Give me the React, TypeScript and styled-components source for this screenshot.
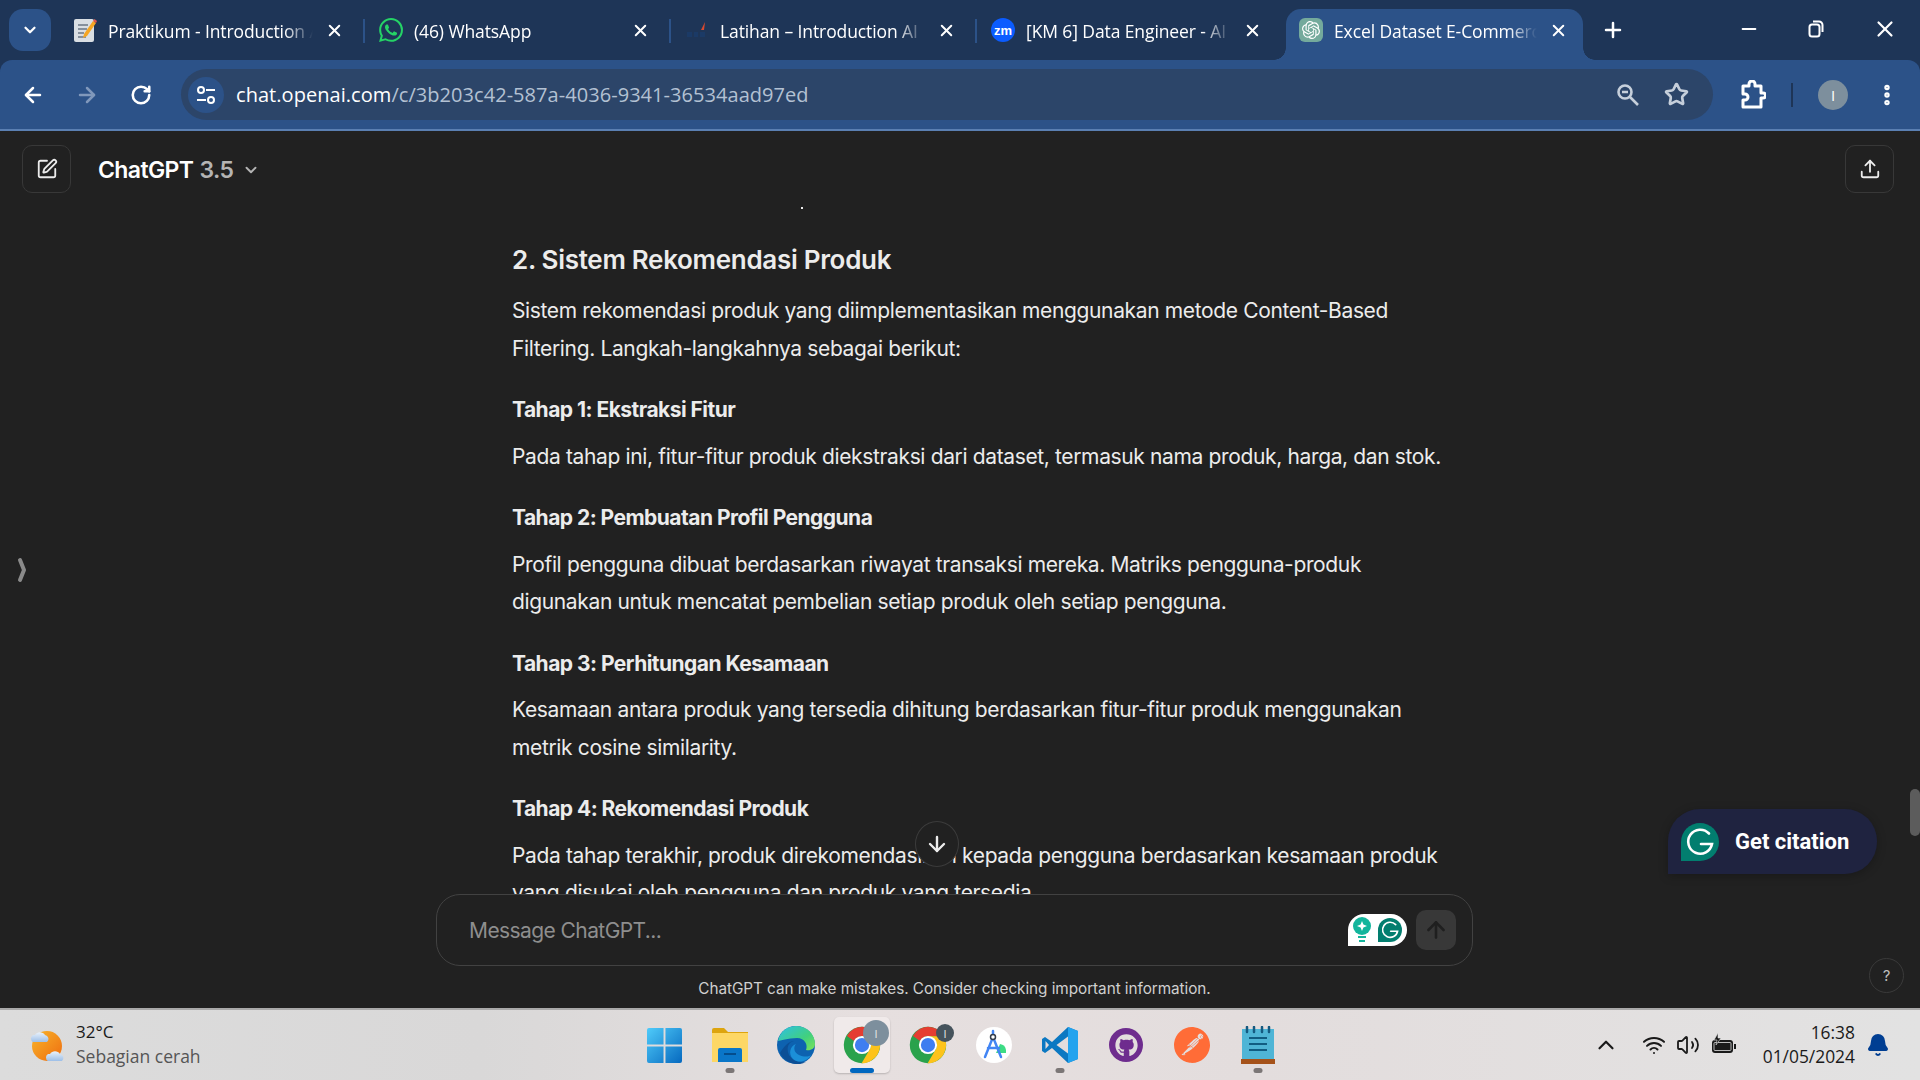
import React, { FC, ReactNode } from "react";
import styled, { createGlobalStyle } from "styled-components";
import {
  ArrowDown,
  ArrowLeft,
  ArrowRight,
  ArrowUp,
  Bell,
  ChevronDown,
  ChevronUp,
  EllipsisVertical,
  Minus,
  Plus,
  RotateCw,
  SquarePen,
  Star,
  Upload,
  Volume2,
  Wifi,
  X,
} from "lucide-react";
import { SiOpenai, SiPostman, SiWhatsapp } from "react-icons/si";
import { FaGithub } from "react-icons/fa";

const GlobalStyle = createGlobalStyle`
  html, body {
    margin: 0;
    padding: 0;
    height: 100%;
    overflow: hidden;
    background: #212121;
  }
  #root {
    height: 100%;
  }
  * {
    box-sizing: border-box;
  }
`;

const Page = styled.div`
  display: flex;
  flex-direction: column;
  height: 1080px;
  width: 1920px;
  font-family: "Inter", "Liberation Sans", sans-serif;
  background: #1e3557;
`;

/* ---------- tab strip ---------- */

const TabStrip = styled.div`
  display: flex;
  align-items: flex-end;
  height: 60px;
  padding-left: 9px;
  color: #fff;
  font-family: "Open Sans", "Liberation Sans", sans-serif;
`;

const TabSearch = styled.div`
  display: flex;
  align-items: center;
  justify-content: center;
  width: 42px;
  height: 42px;
  margin: 0 8px 9px 0;
  border-radius: 14px;
  background: #2c5288;
`;

const Tab = styled.div<{ $active?: boolean; $last?: boolean }>`
  position: relative;
  display: flex;
  align-items: center;
  flex: none;
  width: ${(p) => (p.$active ? "297px" : "306px")};
  height: 51px;
  margin-left: ${(p) => (p.$active ? "3px" : "0")};
  padding: 0 ${(p) => (p.$active ? "15px" : "21px")} 9px ${(p) => (p.$active ? "13px" : "14px")};
  border-radius: 15px 15px 0 0;
  background: ${(p) => (p.$active ? "#2c5288" : "transparent")};

  &::after {
    content: "";
    display: ${(p) => (p.$active || p.$last ? "none" : "block")};
    position: absolute;
    right: 0;
    top: 10px;
    width: 2px;
    height: 24px;
    background: #2c5288;
  }

  &::before {
    content: "";
    display: ${(p) => (p.$active ? "block" : "none")};
    position: absolute;
    left: -12px;
    right: -12px;
    bottom: 0;
    height: 12px;
    background:
      radial-gradient(circle at 0 0, #1e3557 11.5px, #2c5288 12px) left / 12px 12px no-repeat,
      radial-gradient(circle at 100% 0, #1e3557 11.5px, #2c5288 12px) right / 12px 12px no-repeat;
  }
`;

const TabIcon = styled.span`
  display: flex;
  align-items: center;
  justify-content: center;
  flex: none;
  width: 24px;
  height: 24px;
`;

const TabTitle = styled.span`
  flex: 1;
  min-width: 0;
  margin: 2px 12px 0 11px;
  overflow: hidden;
  white-space: nowrap;
  font-size: 17.5px;
  letter-spacing: -0.1px;
  -webkit-mask-image: linear-gradient(to right, #000 86%, transparent 100%);
  mask-image: linear-gradient(to right, #000 86%, transparent 100%);
`;

const ZoomBadge = styled.span`
  display: flex;
  align-items: center;
  justify-content: center;
  width: 24px;
  height: 24px;
  border-radius: 50%;
  background: #0b5cff;
  color: #fff;
  font: 700 13px "Liberation Sans", sans-serif;
`;

const OpenAiBadge = styled.span`
  display: flex;
  align-items: center;
  justify-content: center;
  width: 24px;
  height: 24px;
  border-radius: 6px;
  background: #74aa9c;
  color: #fff;
`;

const NewTab = styled.div`
  display: flex;
  margin: 0 0 18px 18px;
`;

const WindowControls = styled.div`
  display: flex;
  align-items: center;
  margin-left: auto;
  padding-right: 22px;
  margin-bottom: 18px;
  gap: 48px;
`;

/* ---------- toolbar ---------- */

const Toolbar = styled.div`
  display: flex;
  align-items: center;
  flex: none;
  height: 71px;
  padding: 0 0 0 11px;
  border-radius: 12px 12px 0 0;
  border-bottom: 2px solid #5a7fb2;
  background: #2c5288;
  color: #fff;
`;

const NavButton = styled.div<{ $dim?: boolean }>`
  display: flex;
  align-items: center;
  justify-content: center;
  width: 44px;
  height: 44px;
  margin-right: 10px;
  color: ${(p) => (p.$dim ? "#8098bb" : "#fff")};
`;

const Omnibox = styled.div`
  display: flex;
  align-items: center;
  width: 1532px;
  height: 51px;
  margin-left: 8px;
  padding: 0 24px 0 7px;
  border-radius: 26px;
  background: #2c4569;
`;

const SiteBadge = styled.div`
  display: flex;
  align-items: center;
  justify-content: center;
  width: 36px;
  height: 36px;
  border-radius: 50%;
  background: #2c5288;
`;

const Url = styled.div`
  margin-left: 12px;
  font-family: "Open Sans", "Liberation Sans", sans-serif;
  font-size: 20px;
  letter-spacing: 0.05px;
  color: #b3c1d3;
  white-space: nowrap;

  b {
    font-weight: 400;
    color: #fff;
  }
`;

const OmniActions = styled.div`
  display: flex;
  align-items: center;
  gap: 24px;
  margin-left: auto;
  color: #c6cfdb;
`;

const ToolbarRight = styled.div`
  display: flex;
  align-items: center;
  margin-left: 27px;
`;

const ToolbarDivider = styled.div`
  width: 2px;
  height: 24px;
  margin: 0 25px 0 25px;
  background: #1e3557;
`;

const Avatar = styled.div`
  display: flex;
  align-items: center;
  justify-content: center;
  width: 30px;
  height: 30px;
  margin-right: 26px;
  border-radius: 50%;
  background: #7d8f9d;
  color: #fff;
  font: 400 15px "Open Sans", sans-serif;
`;

/* ---------- chat ---------- */

const Main = styled.main`
  position: relative;
  display: flex;
  flex: 1;
  flex-direction: column;
  min-height: 0;
  background: #212121;
  color: #ececec;
`;

const ChatHeader = styled.header`
  display: flex;
  align-items: center;
  flex: none;
  height: 76px;
  padding: 0 26px 0 22px;
`;

const IconButton = styled.div`
  display: flex;
  align-items: center;
  justify-content: center;
  width: 49px;
  height: 48px;
  border: 1px solid #383838;
  border-radius: 10px;
  color: #ececec;
`;

const ModelName = styled.div`
  display: flex;
  align-items: center;
  margin: 2px 0 0 27px;
  font-size: 23px;
  font-weight: 600;
  letter-spacing: -0.6px;
  color: #fff;

  span {
    margin-left: 6px;
    color: #b4b4b4;
  }

  svg {
    margin-left: 9px;
    color: #b4b4b4;
  }
`;

const HeaderSpacer = styled.div`
  flex: 1;
`;

const Transcript = styled.div`
  flex: 1;
  min-height: 0;
  overflow: hidden;
  padding-left: 512px;
`;

const Article = styled.article`
  width: 940px;
`;

const ClippedTail = styled.div`
  width: 2px;
  height: 2px;
  margin: 0 0 32px 289px;
  background: #ececec;
`;

const Heading = styled.h3`
  margin: 0 0 14px;
  font-size: 26px;
  line-height: 37px;
  font-weight: 600;
  letter-spacing: -0.3px;
`;

const Para = styled.p`
  margin: 0 0 24px;
  font-size: 21px;
  line-height: 37.5px;
  letter-spacing: -0.36px;
`;

const StepTitle = styled.h4`
  margin: 0 0 9px;
  font-size: 21px;
  line-height: 37.5px;
  font-weight: 700;
  letter-spacing: -0.53px;
`;

const Footer = styled.div`
  flex: none;
  width: 1037px;
  margin-left: 436px;
`;

const Composer = styled.div`
  display: flex;
  align-items: center;
  height: 72px;
  padding: 0 16px 0 32px;
  border: 1px solid #424242;
  border-radius: 24px;
  background: #212121;
`;

const Placeholder = styled.div`
  flex: 1;
  font-size: 21px;
  letter-spacing: -0.58px;
  color: #8e8e8e;
`;

const GrammarlyPill = styled.div`
  display: flex;
  align-items: center;
  justify-content: center;
  gap: 7px;
  width: 59px;
  height: 32px;
  margin-right: 9px;
  border-radius: 16px 16px 16px 0;
  background: #fff;
`;

const SendButton = styled.div`
  display: flex;
  align-items: center;
  justify-content: center;
  width: 40px;
  height: 40px;
  border-radius: 10px;
  background: #383838;
  color: #1f1f1f;
`;

const Disclaimer = styled.div`
  height: 42px;
  text-align: center;
  line-height: 46px;
  font-size: 15.3px;
  letter-spacing: -0.05px;
  color: #cfcfcf;
`;

const SidebarToggle = styled.div`
  position: absolute;
  left: 17px;
  top: 426px;
  display: flex;
`;

const ScrollDown = styled.div`
  position: absolute;
  left: 915px;
  top: 690px;
  display: flex;
  align-items: center;
  justify-content: center;
  width: 44px;
  height: 46px;
  border: 1px solid #3c3c3c;
  border-radius: 50%;
  background: #212121;
  color: #ececec;
`;

const CitationButton = styled.div`
  position: absolute;
  left: 1668px;
  top: 678px;
  display: flex;
  align-items: center;
  width: 209px;
  height: 65px;
  padding-left: 13px;
  border-radius: 32px 32px 32px 0;
  background: #1f2340;
  box-shadow: 0 2px 10px rgba(0, 0, 0, 0.25);
  color: #fff;
  font-family: "Roboto", "Liberation Sans", sans-serif;
  font-size: 22px;
  font-weight: 700;

  span {
    margin-left: 16px;
  }
`;

const ScrollThumb = styled.div`
  position: absolute;
  right: 0;
  top: 658px;
  width: 10px;
  height: 47px;
  border-radius: 5px;
  background: #5c5c5c;
`;

const HelpButton = styled.div`
  position: absolute;
  left: 1869px;
  top: 827px;
  display: flex;
  align-items: center;
  justify-content: center;
  width: 35px;
  height: 35px;
  border: 1px solid #3a3a3a;
  border-radius: 50%;
  color: #bdbdbd;
  font-size: 15px;
`;

/* ---------- taskbar ---------- */

const Taskbar = styled.footer`
  display: flex;
  align-items: center;
  flex: none;
  height: 72px;
  border-top: 2px solid #aaa9a9;
  background: linear-gradient(90deg, #dcdcdc 0%, #d9d8d8 25%, #e6dfdf 45%, #e3dddd 65%, #e2e2e2 100%);
  font-family: "Open Sans", "Liberation Sans", sans-serif;
`;

const Weather = styled.div`
  display: flex;
  align-items: center;
  flex: none;
  width: 631px;
  padding-left: 29px;
`;

const WeatherText = styled.div`
  margin: 0 0 2px 11px;
  font-size: 17px;
  line-height: 24px;
  color: #1a1a1a;

  small {
    display: block;
    font-size: 17.5px;
    color: #555;
  }
`;

const Dock = styled.div`
  display: flex;
  flex: none;
`;

const DockItem = styled.div<{ $active?: boolean; $running?: boolean }>`
  position: relative;
  display: flex;
  align-items: center;
  justify-content: center;
  width: ${(p) => (p.$active ? "56px" : "66px")};
  height: 56px;
  margin: ${(p) => (p.$active ? "0 5px" : "0")};
  border-radius: 5px;
  background: ${(p) => (p.$active ? "#f0eaea" : "transparent")};
  box-shadow: ${(p) => (p.$active ? "0 1px 2px rgba(0,0,0,0.2)" : "none")};

  &::after {
    content: "";
    display: ${(p) => (p.$running || p.$active ? "block" : "none")};
    position: absolute;
    bottom: 0;
    left: 50%;
    transform: translateX(-50%);
    width: ${(p) => (p.$active ? "24px" : "9px")};
    height: 5px;
    border-radius: 3px;
    background: ${(p) => (p.$active ? "#0067c0" : "#7b7676")};
  }
`;

const CountBadge = styled.span<{ $large?: boolean }>`
  position: absolute;
  top: ${(p) => (p.$large ? "3px" : "7px")};
  right: ${(p) => (p.$large ? "1px" : "7px")};
  display: flex;
  align-items: center;
  justify-content: center;
  width: ${(p) => (p.$large ? "26px" : "18px")};
  height: ${(p) => (p.$large ? "26px" : "18px")};
  border-radius: 50%;
  background: ${(p) => (p.$large ? "#7d8f9d" : "#46535c")};
  color: #e8e8e8;
  font-size: 11px;
`;

const Tray = styled.div`
  display: flex;
  align-items: center;
  margin-left: auto;
  color: #1a1a1a;
`;

const TrayIcon = styled.span<{ $gap: number }>`
  display: flex;
  margin-right: ${(p) => p.$gap}px;
`;

const Clock = styled.div`
  margin: 0 0 3px 4px;
  font-size: 17.4px;
  line-height: 24px;
  text-align: right;
`;

const BellIcon = styled.span`
  display: flex;
  margin: 0 30px 0 11px;
  color: #003e92;
`;

const IconDisc = styled.span<{ $bg: string; $size: number }>`
  display: flex;
  align-items: center;
  justify-content: center;
  width: ${(p) => p.$size}px;
  height: ${(p) => p.$size}px;
  border-radius: 50%;
  background: ${(p) => p.$bg};
`;

/* ---------- drawings ---------- */

const NoteIcon = () => (
  <svg width="24" height="24" viewBox="0 0 24 24">
    <rect x="1" y="1" width="20" height="23" rx="2" fill="#d9dee3" />
    <path d="M5 7h10M5 11h9M5 15h6M5 19h8" stroke="#6b7785" strokeWidth="1.5" />
    <path d="M11 16 20 3l3 2-9 13-4 2z" fill="#f5a623" />
    <path d="M20 3l1.5-2L24 3l-1 2z" fill="#e2574c" />
  </svg>
);

const TinySpark = () => (
  <svg width="24" height="24" viewBox="0 0 24 24">
    <path d="M2 14h5v5H2zM9 14h4v5H9zM15 14h5v5h-5z" fill="#1b3a66" />
    <path d="M16 12l4-8-1 8z" fill="#d8492f" />
  </svg>
);

const TuneIcon = () => (
  <svg width="22" height="22" viewBox="0 0 22 22" fill="none" stroke="#fff" strokeWidth="2">
    <circle cx="6" cy="6" r="3" />
    <path d="M11 6h9M2 16h9" />
    <circle cx="16" cy="16" r="3" />
  </svg>
);

const RestoreIcon = () => (
  <svg width="16" height="18" viewBox="0 0 16 18" fill="none" stroke="#fff" strokeWidth="2">
    <rect x="1.5" y="4.5" width="10" height="12" rx="2.5" />
    <path d="M5 1.5h6a3.5 3.5 0 0 1 3.5 3.5v7" />
  </svg>
);

const MagnifierMinus = () => (
  <svg width="24" height="24" viewBox="0 0 24 24" fill="none" stroke="#c6cfdb" strokeWidth="2.6">
    <circle cx="9" cy="9" r="6.5" />
    <path d="M6 9h6M14 14l8 8" />
  </svg>
);

const ExtensionIcon = () => (
  <svg width="26" height="30" viewBox="0 0 26 30" fill="none" stroke="#fff" strokeWidth="3" strokeLinejoin="round">
    <path d="M3 6h6V4a3 3 0 0 1 6 0v2h6v7h2a2.5 2.5 0 0 1 0 5h-2v9H3v-7h2a3 3 0 0 0 0-6H3z" />
  </svg>
);

const GrammarlyG: FC<{ size: number }> = ({ size }) => (
  <svg width={size} height={size} viewBox="0 0 38 38">
    <path d="M19 0a19 19 0 1 1 0 38H0V19A19 19 0 0 1 19 0z" fill="#027e6f" />
    <path
      d="M28 10.5A12 12 0 1 0 31 21H20"
      fill="none"
      stroke="#fff"
      strokeWidth="2.6"
      strokeLinecap="round"
    />
  </svg>
);

const BulbIcon = () => (
  <svg width="18" height="26" viewBox="0 0 18 26">
    <circle cx="9" cy="9" r="9" fill="#13b59c" />
    <path d="M9 4l1.4 3.6L14 9l-3.6 1.4L9 14l-1.4-3.6L4 9l3.6-1.4z" fill="#fff" />
    <path d="M5 19h8v2H5zM6 23h6v2H6z" fill="#13b59c" />
  </svg>
);

const SidebarChevron = () => (
  <svg width="10" height="26" viewBox="0 0 10 26" fill="none" stroke="#8a8a8a" strokeWidth="4" strokeLinecap="round" strokeLinejoin="round">
    <path d="M3 3l4 10-4 10" />
  </svg>
);

const WeatherIcon = () => (
  <svg width="36" height="34" viewBox="0 0 36 34">
    <defs>
      <linearGradient id="sun" x1="0" y1="0" x2="1" y2="1">
        <stop offset="0" stopColor="#f7b52c" />
        <stop offset="1" stopColor="#ef6c0f" />
      </linearGradient>
      <linearGradient id="cloud" x1="0" y1="0" x2="0" y2="1">
        <stop offset="0" stopColor="#e8f1fb" />
        <stop offset="1" stopColor="#9dbfe8" />
      </linearGradient>
    </defs>
    <circle cx="18" cy="18" r="15" fill="url(#sun)" />
    <path d="M4 14a4 4 0 0 1 0-7h2a6 6 0 0 1 10 0 4 4 0 0 1 2 7z" fill="url(#cloud)" />
    <path d="M19 33a4 4 0 0 1 0-7h2a6 6 0 0 1 10 0 4 4 0 0 1 2 7z" fill="url(#cloud)" />
  </svg>
);

const WindowsIcon = () => (
  <svg width="35" height="35" viewBox="0 0 36 36">
    <defs>
      <linearGradient id="win" x1="0" y1="0" x2="1" y2="1">
        <stop offset="0" stopColor="#4fcbfa" />
        <stop offset="1" stopColor="#0669bf" />
      </linearGradient>
    </defs>
    <path d="M2 0h15v17H0V2a2 2 0 0 1 2-2zM19 0h15a2 2 0 0 1 2 2v15H19zM0 19h17v17H2a2 2 0 0 1-2-2zM19 19h17v15a2 2 0 0 1-2 2H19z" fill="url(#win)" />
  </svg>
);

const FolderIcon = () => (
  <svg width="36" height="34" viewBox="0 0 36 34">
    <path d="M0 2a2 2 0 0 1 2-2h10l4 4h20v4H0z" fill="#dda40e" />
    <path d="M0 5h36v29H0z" fill="#fdd765" />
    <path d="M6 22a2 2 0 0 1 2-2h20a2 2 0 0 1 2 2v12H6z" fill="#0a76c8" />
    <path d="M12 26h12" stroke="#044d8c" strokeWidth="2" />
  </svg>
);

const EdgeIcon = () => (
  <svg width="38" height="38" viewBox="0 0 38 38">
    <defs>
      <linearGradient id="edgeA" x1="0" y1="0" x2="1" y2="1">
        <stop offset="0" stopColor="#2dc0e6" />
        <stop offset="0.6" stopColor="#41d07e" />
        <stop offset="1" stopColor="#7be35a" />
      </linearGradient>
    </defs>
    <circle cx="19" cy="19" r="19" fill="#0d62b0" />
    <path d="M1 15C3 5 11 0 19 0c11 0 19 8 19 18 0 5-5 7-9 6 2-5-1-12-9-12-9 0-17 3-19 3z" fill="url(#edgeA)" />
    <path d="M17 15c-6 1-8 8-5 14 3 5 10 8 17 7-9 5-21 1-26-9C7 20 12 15 17 15z" fill="#0c4f96" />
    <path d="M19 18c-3 3-2 9 3 11 5 2 9 2 12 0-3 6-12 9-18 4-5-5-3-13 3-15z" fill="#1b8fd8" />
  </svg>
);

const ChromeIcon = () => (
  <svg width="38" height="38" viewBox="0 0 48 48">
    <circle cx="24" cy="24" r="23" fill="#2aa24c" />
    <path d="M24 1a23 23 0 0 1 20 12H24a11 11 0 0 0-10 6L5 12.5A23 23 0 0 1 24 1z" fill="#e53d31" />
    <path d="M44 13a23 23 0 0 1-20.5 34L33.5 30A11 11 0 0 0 33 18.5L24 13z" fill="#fdc31b" />
    <circle cx="24" cy="24" r="11.5" fill="#fff" />
    <circle cx="24" cy="24" r="9" fill="#3f7ef0" />
  </svg>
);

const AndroidStudioIcon = () => (
  <svg width="36" height="36" viewBox="0 0 36 36">
    <circle cx="18" cy="18" r="18" fill="#fff" />
    <path d="M24 17a7 7 0 0 1 6 6v3H20z" fill="#3ddc84" />
    <path d="M17 4v6M9 30l8-20 8 20M12 21h11" fill="none" stroke="#4285f4" strokeWidth="2.5" strokeLinecap="round" />
    <circle cx="17" cy="10" r="2.5" fill="#fff" stroke="#333c4a" strokeWidth="1.5" />
  </svg>
);

const VsCodeIcon = () => (
  <svg width="36" height="36" viewBox="0 0 36 36">
    <path d="M26 0 10 15 3 10 0 12v12l3 2 7-5 16 15 10-4V4z" fill="#0b78c2" />
    <path d="M26 0v36l10-4V4z" fill="#23a3ee" />
    <path d="M26 9.5V26.5L14.5 18zM3.5 14 7 18l-3.5 4z" fill="#e3dddd" />
  </svg>
);

const BatteryIcon = () => (
  <svg width="26" height="24" viewBox="0 0 26 24">
    <rect x="1" y="7" width="21" height="13" rx="3" fill="#1a1a1a" />
    <rect x="3" y="9.5" width="17" height="8" rx="1" fill="#1a1a1a" stroke="#e2e2e2" strokeWidth="0.8" />
    <path d="M23 11h2v5h-2z" fill="#1a1a1a" />
    <path d="M7 0 3 7h3l-1 5 5-7H7z" fill="#1a1a1a" stroke="#e2e2e2" strokeWidth="0.6" />
  </svg>
);

const GithubIcon = () => (
  <IconDisc $bg="#6e2c8e" $size={34}>
    <FaGithub size={23} color="#e3dddd" />
  </IconDisc>
);

const PostmanIcon = () => <SiPostman size={36} color="#ff6c37" />;

const NotepadIcon = () => (
  <svg width="34" height="38" viewBox="0 0 34 38">
    <rect x="1" y="3" width="32" height="30" fill="#4fb5d6" />
    <path d="M0 33h34v5H0z" fill="#a5521a" />
    <path d="M6 1v5M13 1v5M21 1v5M28 1v5" stroke="#155a80" strokeWidth="2.5" strokeLinecap="round" />
    <path d="M8 12h18M8 18h18M8 24h18" stroke="#115d82" strokeWidth="2" />
  </svg>
);

/* ---------- data ---------- */

type TabData = { icon: ReactNode; title: string; active?: boolean };

const tabs: TabData[] = [
  { icon: <NoteIcon />, title: "Praktikum - Introduction AI" },
  { icon: <SiWhatsapp size={24} color="#25d366" />, title: "(46) WhatsApp" },
  { icon: <TinySpark />, title: "Latihan – Introduction AI" },
  { icon: <ZoomBadge>zm</ZoomBadge>, title: "[KM 6] Data Engineer - AI" },
  {
    icon: (
      <OpenAiBadge>
        <SiOpenai size={18} />
      </OpenAiBadge>
    ),
    title: "Excel Dataset E-Commerce",
    active: true,
  },
];

const steps = [
  {
    title: "Tahap 1: Ekstraksi Fitur",
    body: "Pada tahap ini, fitur-fitur produk diekstraksi dari dataset, termasuk nama produk, harga, dan stok.",
  },
  {
    title: "Tahap 2: Pembuatan Profil Pengguna",
    body: "Profil pengguna dibuat berdasarkan riwayat transaksi mereka. Matriks pengguna-produk digunakan untuk mencatat pembelian setiap produk oleh setiap pengguna.",
  },
  {
    title: "Tahap 3: Perhitungan Kesamaan",
    body: "Kesamaan antara produk yang tersedia dihitung berdasarkan fitur-fitur produk menggunakan metrik cosine similarity.",
  },
  {
    title: "Tahap 4: Rekomendasi Produk",
    body: "Pada tahap terakhir, produk direkomendasikan kepada pengguna berdasarkan kesamaan produk yang disukai oleh pengguna dan produk yang tersedia.",
  },
];

export default function App() {
  return (
    <Page>
      <GlobalStyle />
      <TabStrip>
        <TabSearch>
          <ChevronDown size={18} strokeWidth={3} />
        </TabSearch>
        {tabs.map((tab, i) => (
          <Tab key={tab.title} $active={tab.active} $last={i === 3}>
            <TabIcon>{tab.icon}</TabIcon>
            <TabTitle>{tab.title}</TabTitle>
            <X size={19} strokeWidth={2.5} />
          </Tab>
        ))}
        <NewTab>
          <Plus size={24} strokeWidth={2.5} />
        </NewTab>
        <WindowControls>
          <Minus size={22} strokeWidth={2} />
          <RestoreIcon />
          <X size={26} strokeWidth={2} />
        </WindowControls>
      </TabStrip>

      <Toolbar>
        <NavButton>
          <ArrowLeft size={24} strokeWidth={2.5} />
        </NavButton>
        <NavButton $dim>
          <ArrowRight size={24} strokeWidth={2.5} />
        </NavButton>
        <NavButton>
          <RotateCw size={22} strokeWidth={2.8} />
        </NavButton>
        <Omnibox>
          <SiteBadge>
            <TuneIcon />
          </SiteBadge>
          <Url>
            <b>chat.openai.com</b>/c/3b203c42-587a-4036-9341-36534aad97ed
          </Url>
          <OmniActions>
            <MagnifierMinus />
            <Star size={25} strokeWidth={2.6} />
          </OmniActions>
        </Omnibox>
        <ToolbarRight>
          <ExtensionIcon />
          <ToolbarDivider />
          <Avatar>I</Avatar>
          <EllipsisVertical size={26} strokeWidth={3} />
        </ToolbarRight>
      </Toolbar>

      <Main>
        <ChatHeader>
          <IconButton>
            <SquarePen size={22} strokeWidth={2} />
          </IconButton>
          <ModelName>
            ChatGPT<span>3.5</span>
            <ChevronDown size={18} strokeWidth={2.5} />
          </ModelName>
          <HeaderSpacer />
          <IconButton>
            <Upload size={22} strokeWidth={2} />
          </IconButton>
        </ChatHeader>

        <Transcript>
          <Article>
            <ClippedTail />
            <Heading>2. Sistem Rekomendasi Produk</Heading>
            <Para>
              Sistem rekomendasi produk yang diimplementasikan menggunakan metode Content-Based Filtering.
              Langkah-langkahnya sebagai berikut:
            </Para>
            {steps.map((step) => (
              <React.Fragment key={step.title}>
                <StepTitle>{step.title}</StepTitle>
                <Para>{step.body}</Para>
              </React.Fragment>
            ))}
          </Article>
        </Transcript>

        <Footer>
          <Composer>
            <Placeholder>Message ChatGPT...</Placeholder>
            <GrammarlyPill>
              <BulbIcon />
              <GrammarlyG size={24} />
            </GrammarlyPill>
            <SendButton>
              <ArrowUp size={26} strokeWidth={2.4} />
            </SendButton>
          </Composer>
          <Disclaimer>ChatGPT can make mistakes. Consider checking important information.</Disclaimer>
        </Footer>

        <SidebarToggle>
          <SidebarChevron />
        </SidebarToggle>
        <ScrollDown>
          <ArrowDown size={24} strokeWidth={2.4} />
        </ScrollDown>
        <CitationButton>
          <GrammarlyG size={38} />
          <span>Get citation</span>
        </CitationButton>
        <ScrollThumb />
        <HelpButton>?</HelpButton>
      </Main>

      <Taskbar>
        <Weather>
          <WeatherIcon />
          <WeatherText>
            32°C
            <small>Sebagian cerah</small>
          </WeatherText>
        </Weather>
        <Dock>
          <DockItem>
            <WindowsIcon />
          </DockItem>
          <DockItem $running>
            <FolderIcon />
          </DockItem>
          <DockItem>
            <EdgeIcon />
          </DockItem>
          <DockItem $active>
            <ChromeIcon />
            <CountBadge $large>I</CountBadge>
          </DockItem>
          <DockItem>
            <ChromeIcon />
            <CountBadge>I</CountBadge>
          </DockItem>
          <DockItem>
            <AndroidStudioIcon />
          </DockItem>
          <DockItem $running>
            <VsCodeIcon />
          </DockItem>
          <DockItem>
            <GithubIcon />
          </DockItem>
          <DockItem>
            <PostmanIcon />
          </DockItem>
          <DockItem $running>
            <NotepadIcon />
          </DockItem>
        </Dock>
        <Tray>
          <TrayIcon $gap={23}>
            <ChevronUp size={26} strokeWidth={2} />
          </TrayIcon>
          <TrayIcon $gap={10}>
            <Wifi size={24} strokeWidth={2} />
          </TrayIcon>
          <TrayIcon $gap={11}>
            <Volume2 size={24} strokeWidth={1.8} />
          </TrayIcon>
          <TrayIcon $gap={22}>
            <BatteryIcon />
          </TrayIcon>
          <Clock>
            16:38
            <br />
            01/05/2024
          </Clock>
          <BellIcon>
            <Bell size={24} fill="#003e92" />
          </BellIcon>
        </Tray>
      </Taskbar>
    </Page>
  );
}
